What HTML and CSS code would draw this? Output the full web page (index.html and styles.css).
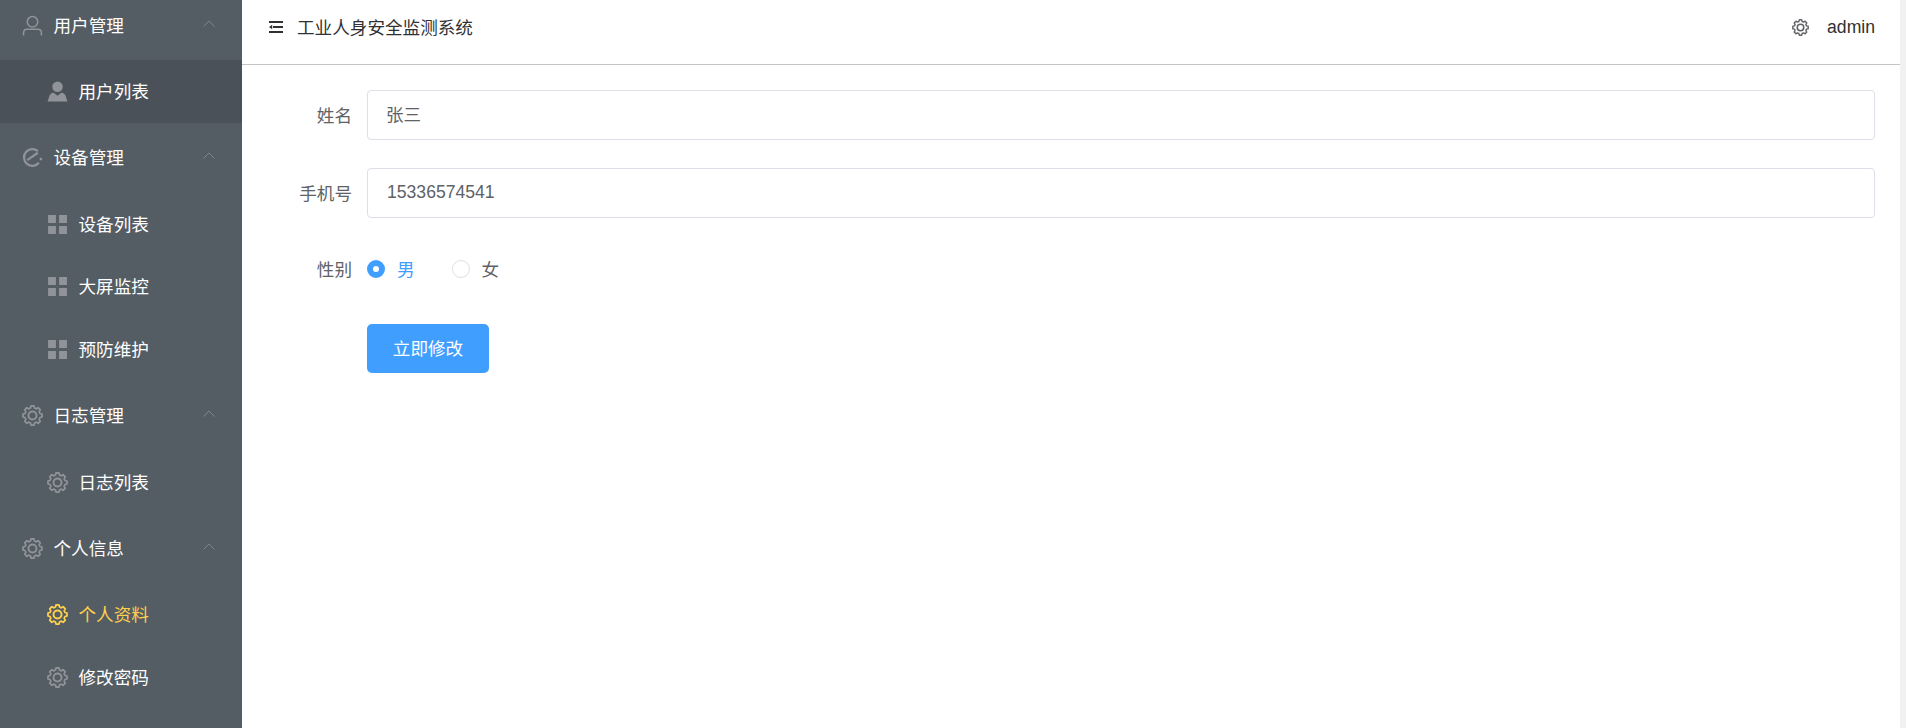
FILE: index.html
```html
<!DOCTYPE html>
<html lang="en">
<head>
    <meta charset="UTF-8">
    <meta name="viewport" content="width=device-width, initial-scale=1.0">
    <title>工业人身安全监测系统</title>
    <link rel="stylesheet" href="styles.css">
</head>
<body>
    <svg class="defs" width="0" height="0">
        <symbol id="gear" viewBox="0 0 24 24">
            <path fill="none" stroke="currentColor" stroke-width="2" stroke-linejoin="round" d="M22.860 13.720V10.280L20.500 9.720L19.620 7.600L20.900 5.530L18.470 3.100L16.400 4.380L14.280 3.500L13.720 1.140H10.280L9.720 3.500L7.600 4.380L5.530 3.100L3.100 5.530L4.380 7.600L3.500 9.720L1.140 10.280V13.720L3.500 14.280L4.380 16.400L3.100 18.470L5.530 20.900L7.600 19.620L9.720 20.500L10.280 22.860H13.720L14.280 20.500L16.400 19.620L18.470 20.900L20.900 18.470L19.620 16.400L20.500 14.280Z"/>
            <circle cx="12" cy="12" r="4.600" fill="none" stroke="currentColor" stroke-width="2.200"/>
        </symbol>
        <symbol id="grid" viewBox="0 0 20 20">
            <path fill="currentColor" d="M1 1h7.500v7.500H1zM11.500 1H19v7.500h-7.500zM1 11.500h7.500V19H1zM11.500 11.500H19V19h-7.500z"/>
        </symbol>
        <symbol id="chevron" viewBox="0 0 12 7">
            <path fill="none" stroke="currentColor" stroke-width="1" d="M.5 6.500L6 1l5.500 5.500"/>
        </symbol>
    </svg>

    <div class="app">
        <!-- Sidebar -->
        <aside class="sidebar">
            <ul class="menu">
                <li class="menu-group">
                    <svg class="menu-icon" viewBox="0 0 20 20"><circle cx="10" cy="6.500" r="5" fill="none" stroke="currentColor" stroke-width="1.500"/><path fill="none" stroke="currentColor" stroke-width="1.500" d="M1.500 19.500v-2.500q0-3.500 3.500-3.500h10q3.500 0 3.500 3.500v2.500"/></svg>
                    <span>用户管理</span>
                    <svg class="chevron"><use href="#chevron"/></svg>
                </li>
                <li class="menu-item is-open">
                    <svg class="menu-icon" viewBox="0 0 20 20"><circle cx="10" cy="5.500" r="5" fill="currentColor"/><path fill="currentColor" d="M0.500 19.500l2-6q.5-1.500 3.500-2.500l4 3 4-3q3 1 3.500 2.500l2 6z"/></svg>
                    <span>用户列表</span>
                </li>
                <li class="menu-group">
                    <svg class="menu-icon" viewBox="0 0 20 20"><path fill="none" stroke="currentColor" stroke-width="2.200" d="M15.100 3.900A8 8 0 1 0 16.100 15.100M5 12.500L15.100 5.500"/><circle cx="18" cy="11.500" r="1.300" fill="currentColor"/></svg>
                    <span>设备管理</span>
                    <svg class="chevron"><use href="#chevron"/></svg>
                </li>
                <li class="menu-item">
                    <svg class="menu-icon"><use href="#grid"/></svg>
                    <span>设备列表</span>
                </li>
                <li class="menu-item">
                    <svg class="menu-icon"><use href="#grid"/></svg>
                    <span>大屏监控</span>
                </li>
                <li class="menu-item">
                    <svg class="menu-icon"><use href="#grid"/></svg>
                    <span>预防维护</span>
                </li>
                <li class="menu-group">
                    <svg class="menu-icon"><use href="#gear"/></svg>
                    <span>日志管理</span>
                    <svg class="chevron"><use href="#chevron"/></svg>
                </li>
                <li class="menu-item">
                    <svg class="menu-icon"><use href="#gear"/></svg>
                    <span>日志列表</span>
                </li>
                <li class="menu-group">
                    <svg class="menu-icon"><use href="#gear"/></svg>
                    <span>个人信息</span>
                    <svg class="chevron"><use href="#chevron"/></svg>
                </li>
                <li class="menu-item is-active">
                    <svg class="menu-icon"><use href="#gear"/></svg>
                    <span>个人资料</span>
                </li>
                <li class="menu-item">
                    <svg class="menu-icon"><use href="#gear"/></svg>
                    <span>修改密码</span>
                </li>
            </ul>
        </aside>

        <!-- Main area -->
        <div class="main">
            <header class="topbar">
                <svg class="fold-icon" viewBox="0 0 14 12"><path fill="#303133" d="M0 0h14v2H0zM4 5h10v2H4zM0 6l3.200-2.200v4.400zM0 10h14v2H0z"/></svg>
                <span class="topbar-title">工业人身安全监测系统</span>
                <svg class="topbar-gear"><use href="#gear"/></svg>
                <span class="topbar-user">admin</span>
            </header>

            <form class="profile-form">
                <div class="form-row">
                    <label class="form-label">姓名</label>
                    <input class="form-input" type="text" value="张三">
                </div>
                <div class="form-row">
                    <label class="form-label">手机号</label>
                    <input class="form-input num" type="text" value="15336574541">
                </div>
                <div class="form-row radio-row">
                    <label class="form-label">性别</label>
                    <span class="radio is-checked"><i class="radio-dot"></i>男</span>
                    <span class="radio"><i class="radio-dot"></i>女</span>
                </div>
                <div class="form-row">
                    <span class="form-label"></span>
                    <button class="submit-btn" type="button">立即修改</button>
                </div>
            </form>
        </div>

        <div class="scrollbar"></div>
    </div>
</body>
</html>
```

FILE: styles.css
```css
* {
    box-sizing: border-box;
}

body {
    font-family: "Liberation Sans", "Noto Sans CJK SC", sans-serif;
    font-size: 17.6px;
    margin: 0;
    padding: 0;
    background-color: #ffffff;
}

.defs {
    display: block;
    height: 0;
}

.app {
    display: flex;
    height: 728px;
    overflow: hidden;
}

/* Sidebar */
.sidebar {
    width: 242px;
    flex-shrink: 0;
    background-color: #545c64;
    overflow: hidden;
}

.menu {
    list-style: none;
    margin: -10px 0 0;
    padding: 0;
    color: #ffffff;
}

.menu-group, .menu-item {
    display: flex;
    align-items: center;
    gap: 10.5px;
}

.menu-group span, .menu-item span {
    padding-bottom: 2px;
}

.menu-group {
    height: 70px;
    padding: 0 27px 0 22px;
}

.menu-item {
    height: 62.7px;
    padding-left: 47px;
}

.menu-item.is-open {
    background-color: #4a5158;
}

.menu-item.is-active {
    color: #ffd04b;
}

.menu-icon {
    width: 21px;
    height: 21px;
    flex-shrink: 0;
    color: #909399;
}

.is-active .menu-icon {
    color: #ffd04b;
}

.chevron {
    width: 12px;
    height: 7px;
    margin-left: auto;
    margin-bottom: 4px;
    color: #7d858c;
}

/* Header */
.main {
    flex: 1;
    min-width: 0;
}

.topbar {
    display: flex;
    align-items: center;
    height: 65px;
    padding: 14px 25px 24px 27px;
    border-bottom: 1px solid #c4c4c4;
    color: #303133;
}

.fold-icon {
    width: 14px;
    height: 12px;
    margin-right: 14px;
}

.topbar-title {
    padding-bottom: 2px;
}

.topbar-gear {
    width: 17px;
    height: 17px;
    margin-left: auto;
    margin-right: 18px;
    color: #606266;
}

/* Form */
.profile-form {
    padding: 25px 25px 0 0;
}

.form-row {
    display: flex;
    align-items: center;
    height: 49.500px;
    margin-bottom: 28.500px;
    color: #606266;
}

.form-label {
    width: 125px;
    padding: 0 15px 1px 0;
    text-align: right;
    flex-shrink: 0;
}

.form-input {
    flex: 1;
    height: 49.500px;
    padding: 0 18px 2px;
    border: 1px solid #dcdfe6;
    border-radius: 4px;
    font-family: inherit;
    font-size: 17.6px;
    color: #606266;
    background-color: #ffffff;
}

.form-input.num {
    padding: 0 18px 0 19px;
}

.radio-row {
    padding-bottom: 4px;
}

.radio {
    display: flex;
    align-items: center;
    gap: 12px;
    margin-right: 37px;
}

.radio-dot {
    width: 18px;
    height: 18px;
    border: 1px solid #dcdfe6;
    border-radius: 50%;
    background-color: #ffffff;
}

.radio.is-checked {
    color: #409eff;
}

.radio.is-checked .radio-dot {
    border: 6px solid #409eff;
}

.submit-btn {
    width: 122px;
    height: 49px;
    padding: 0 0 2px;
    border: none;
    border-radius: 5px;
    background-color: #409eff;
    color: #ffffff;
    font-family: inherit;
    font-size: 17.6px;
}

.scrollbar {
    width: 6px;
    flex-shrink: 0;
    background-color: #f1f1f1;
}
```
